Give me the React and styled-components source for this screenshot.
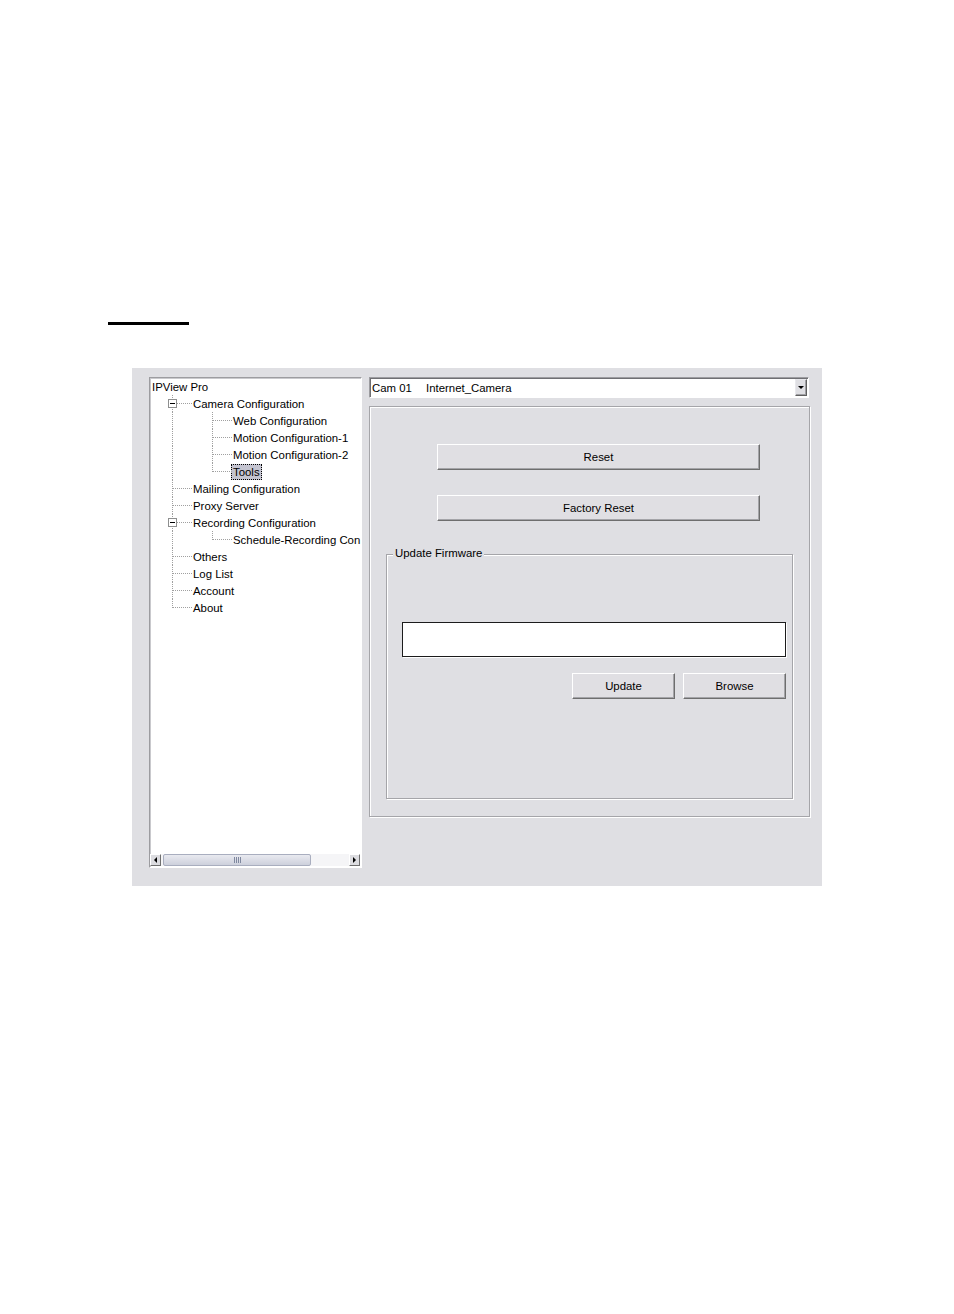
import React from "react";
import styled, { createGlobalStyle } from "styled-components";

const GlobalStyle = createGlobalStyle`
  html, body {
    margin: 0;
    padding: 0;
    background: #ffffff;
  }
  body {
    font-family: "Liberation Sans", Arial, sans-serif;
    font-size: 11.4px;
    color: #000;
  }
`;

const treeItems = [
  { label: "Camera Configuration", cells: ["tee"], expander: true },
  { label: "Web Configuration", cells: ["pipe", "tee"] },
  { label: "Motion Configuration-1", cells: ["pipe", "tee"] },
  { label: "Motion Configuration-2", cells: ["pipe", "tee"] },
  { label: "Tools", cells: ["pipe", "elbow"], selected: true },
  { label: "Mailing Configuration", cells: ["tee"] },
  { label: "Proxy Server", cells: ["tee"] },
  { label: "Recording Configuration", cells: ["tee"], expander: true },
  { label: "Schedule-Recording Con", cells: ["pipe", "elbow"] },
  { label: "Others", cells: ["tee"] },
  { label: "Log List", cells: ["tee"] },
  { label: "Account", cells: ["tee"] },
  { label: "About", cells: ["elbow"] },
];

const App = () => {
  return (
    <Page>
      <GlobalStyle />
      <Underline />
      <Window>
        <TreeBox>
          <TreeBody>
            <TreeRow>
              <Label root>IPView Pro</Label>
            </TreeRow>
            {treeItems.map((item, index) => (
              <TreeRow key={index}>
                {item.cells.map((kind, i) => (
                  <Cell key={i} kind={kind}>
                    {item.expander && i === item.cells.length - 1 && <Expander />}
                  </Cell>
                ))}
                <Label selected={item.selected}>{item.label}</Label>
              </TreeRow>
            ))}
          </TreeBody>
          <HScroll>
            <ArrowButton>
              <ArrowLeft />
            </ArrowButton>
            <Thumb>
              <Grip />
            </Thumb>
            <Track />
            <ArrowButton>
              <ArrowRight />
            </ArrowButton>
          </HScroll>
        </TreeBox>

        <RightColumn>
          <Combo>
            <CamId>Cam 01</CamId>
            <span>Internet_Camera</span>
            <DropButton>
              <ArrowDown />
            </DropButton>
          </Combo>

          <MainGroup>
            <Button width={323} indent={51}>
              Reset
            </Button>
            <Button width={323} indent={51}>
              Factory Reset
            </Button>
            <FirmwareGroup>
              <Legend>Update Firmware</Legend>
              <PathField />
              <ButtonRow>
                <Button width={103}>Update</Button>
                <Button width={103}>Browse</Button>
              </ButtonRow>
            </FirmwareGroup>
          </MainGroup>
        </RightColumn>
      </Window>
    </Page>
  );
};

export default App;

const Page = styled.div`
  width: 954px;
  height: 1314px;
  box-sizing: border-box;
  padding: 322px 0 0 108px;
`;

const Underline = styled.div`
  width: 81px;
  height: 3px;
  background: #000;
`;

const Window = styled.div`
  width: 690px;
  height: 518px;
  box-sizing: border-box;
  margin: 43px 0 0 24px;
  padding: 9px 0 0 17px;
  background: #dfdfe3;
  display: flex;
  gap: 7px;
  align-items: flex-start;
`;

const TreeBox = styled.div`
  width: 213px;
  height: 491px;
  box-sizing: border-box;
  background: #fff;
  border: 1px solid;
  border-color: #9c9ca0 #ffffff #ffffff #9c9ca0;
  box-shadow: inset 1px 1px 0 #c9c9cd;
  display: flex;
  flex-direction: column;
`;

const TreeBody = styled.div`
  flex: 1;
  overflow: hidden;
  padding: 0 0 0 2px;
  white-space: nowrap;
`;

const TreeRow = styled.div`
  height: 17px;
  display: flex;
  align-items: center;
`;

const Cell = styled.div`
  position: relative;
  width: 40px;
  height: 17px;
  flex-shrink: 0;

  &::before {
    content: "";
    position: absolute;
    left: 20px;
    top: 0;
    height: ${(p) => (p.kind === "elbow" ? "9px" : "17px")};
    border-left: 1px dotted #a0a0a0;
  }

  &::after {
    content: "";
    position: absolute;
    left: 21px;
    top: 8px;
    width: 19px;
    border-top: 1px dotted #a0a0a0;
    display: ${(p) => (p.kind === "pipe" ? "none" : "block")};
  }
`;

const Expander = styled.div`
  position: absolute;
  left: 16px;
  top: 4px;
  width: 7px;
  height: 7px;
  background: #fff;
  border: 1px solid #8e8f8f;
  z-index: 1;

  &::after {
    content: "";
    position: absolute;
    left: 1px;
    top: 3px;
    width: 5px;
    height: 1px;
    background: #000;
  }
`;

const Label = styled.span`
  margin-left: ${(p) => (p.root ? "-2px" : "-1px")};
  padding: 0 1px;
  line-height: 14px;
  border: 1px ${(p) => (p.selected ? "dotted #000" : "solid transparent")};
  background: ${(p) => (p.selected ? "#c4c4d0" : "transparent")};
`;

const HScroll = styled.div`
  height: 12px;
  margin: 0 1px 1px 0;
  display: flex;
  align-items: stretch;
  background: #f5f5f7;
`;

const ArrowButton = styled.div`
  width: 11px;
  box-sizing: border-box;
  border: 1px solid;
  border-color: #ffffff #6f6f6f #6f6f6f #ffffff;
  background: #dcdce0;
  display: flex;
  align-items: center;
  justify-content: center;
`;

const ArrowLeft = styled.div`
  width: 0;
  height: 0;
  border-top: 3px solid transparent;
  border-bottom: 3px solid transparent;
  border-right: 3px solid #000;
`;

const ArrowRight = styled.div`
  width: 0;
  height: 0;
  border-top: 3px solid transparent;
  border-bottom: 3px solid transparent;
  border-left: 3px solid #000;
`;

const ArrowDown = styled.div`
  width: 0;
  height: 0;
  border-left: 3px solid transparent;
  border-right: 3px solid transparent;
  border-top: 3px solid #000;
`;

const Thumb = styled.div`
  width: 148px;
  margin-left: 2px;
  box-sizing: border-box;
  border: 1px solid #a9aebf;
  border-radius: 2px;
  background: linear-gradient(#e9eaf0, #cdd0dc);
  display: flex;
  align-items: center;
  justify-content: center;
`;

const Grip = styled.div`
  width: 7px;
  height: 6px;
  background: repeating-linear-gradient(90deg, #7f889f 0 1px, transparent 1px 2px);
`;

const Track = styled.div`
  flex: 1;
`;

const RightColumn = styled.div`
  width: 441px;
  display: flex;
  flex-direction: column;
`;

const Combo = styled.div`
  width: 440px;
  height: 21px;
  box-sizing: border-box;
  background: #fff;
  border: 1px solid;
  border-color: #9c9ca0 #ffffff #ffffff #9c9ca0;
  box-shadow: inset 1px 1px 0 #6f6f73;
  display: flex;
  align-items: center;
  padding-left: 2px;
`;

const CamId = styled.span`
  width: 54px;
`;

const DropButton = styled.div`
  margin-left: auto;
  margin-right: 1px;
  width: 12px;
  height: 17px;
  box-sizing: border-box;
  border: 1px solid;
  border-color: #e8e8ec #5f5f5f #5f5f5f #e8e8ec;
  box-shadow: inset -1px -1px 0 #a0a0a4;
  background: #dfdfe3;
  display: flex;
  align-items: center;
  justify-content: center;
`;

const MainGroup = styled.div`
  margin-top: 8px;
  width: 441px;
  height: 411px;
  box-sizing: border-box;
  border: 1px solid #a5a5a9;
  box-shadow: 1px 1px 0 #fff, inset 1px 1px 0 #fff;
  padding: 37px 0 0 16px;
  display: flex;
  flex-direction: column;
  align-items: flex-start;
  gap: 25px;
`;

const Button = styled.div`
  width: ${(p) => p.width}px;
  height: 26px;
  margin-left: ${(p) => p.indent || 0}px;
  box-sizing: border-box;
  border: 1px solid;
  border-color: #ffffff #6e6e6e #6e6e6e #ffffff;
  box-shadow: inset -1px -1px 0 #a4a4a8;
  background: #e0dfe3;
  display: flex;
  align-items: center;
  justify-content: center;
`;

const FirmwareGroup = styled.div`
  position: relative;
  margin-top: 8px;
  width: 407px;
  height: 245px;
  box-sizing: border-box;
  border: 1px solid #a5a5a9;
  box-shadow: 1px 1px 0 #fff, inset 1px 1px 0 #fff;
  padding: 67px 0 0 15px;
`;

const Legend = styled.span`
  position: absolute;
  top: -8px;
  left: 6px;
  padding: 0 2px;
  line-height: 13px;
  background: #dfdfe3;
`;

const PathField = styled.div`
  width: 384px;
  height: 35px;
  box-sizing: border-box;
  background: #fff;
  border: 1px solid #1c1c1c;
  box-shadow: 1px 1px 0 #fff;
`;

const ButtonRow = styled.div`
  width: 384px;
  margin-top: 16px;
  display: flex;
  justify-content: flex-end;
  gap: 8px;
`;
